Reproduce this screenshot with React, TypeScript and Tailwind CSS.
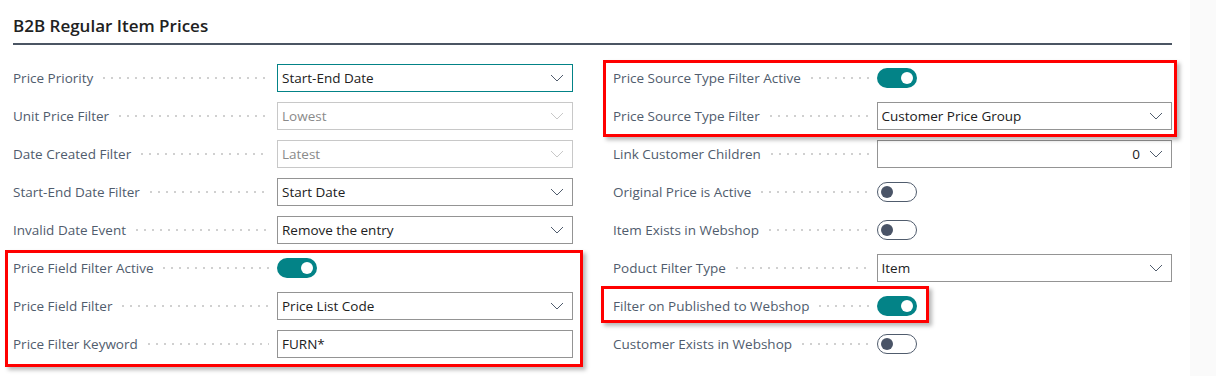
import React from 'react';

type Field =
    | { kind: 'select'; value: string; focused?: boolean; disabled?: boolean; align?: 'right' }
    | { kind: 'text'; value: string }
    | { kind: 'toggle'; on: boolean };

type Row = { label: string; field: Field };

const leftRows: Row[] = [
    { label: 'Price Priority', field: { kind: 'select', value: 'Start-End Date', focused: true } },
    { label: 'Unit Price Filter', field: { kind: 'select', value: 'Lowest', disabled: true } },
    { label: 'Date Created Filter', field: { kind: 'select', value: 'Latest', disabled: true } },
    { label: 'Start-End Date Filter', field: { kind: 'select', value: 'Start Date' } },
    { label: 'Invalid Date Event', field: { kind: 'select', value: 'Remove the entry' } },
];

const leftMarked: Row[] = [
    { label: 'Price Field Filter Active', field: { kind: 'toggle', on: true } },
    { label: 'Price Field Filter', field: { kind: 'select', value: 'Price List Code' } },
    { label: 'Price Filter Keyword', field: { kind: 'text', value: 'FURN*' } },
];

const rightMarkedTop: Row[] = [
    { label: 'Price Source Type Filter Active', field: { kind: 'toggle', on: true } },
    { label: 'Price Source Type Filter', field: { kind: 'select', value: 'Customer Price Group' } },
];

const rightMiddle: Row[] = [
    { label: 'Link Customer Children', field: { kind: 'select', value: '0', align: 'right' } },
    { label: 'Original Price is Active', field: { kind: 'toggle', on: false } },
    { label: 'Item Exists in Webshop', field: { kind: 'toggle', on: false } },
    { label: 'Poduct Filter Type', field: { kind: 'select', value: 'Item' } },
];

const Chevron: React.FC<{ disabled?: boolean }> = ({ disabled }) => (
    <svg width="14" height="8" viewBox="0 0 14 8" fill="none" className="shrink-0">
        <path d="M1 1l6 6 6-6" stroke={disabled ? '#c8c8c8' : '#505c6d'} strokeWidth="1" />
    </svg>
);

const Toggle: React.FC<{ on: boolean }> = ({ on }) =>
    on ? (
        <div className="flex h-[20px] w-[40px] items-center justify-end rounded-full bg-[#038387] pr-[4px]">
            <div className="h-[12px] w-[12px] rounded-full bg-white" />
        </div>
    ) : (
        <div className="flex h-[20px] w-[40px] items-center rounded-full border border-[#505c6d] bg-white pl-[3px]">
            <div className="h-[12px] w-[12px] rounded-full bg-[#4a5467]" />
        </div>
    );

const FieldBox: React.FC<{ field: Field }> = ({ field }) => {
    if (field.kind === 'toggle') {
        return (
            <div className="flex w-[296px] items-center">
                <Toggle on={field.on} />
            </div>
        );
    }
    if (field.kind === 'text') {
        return (
            <div className="flex h-[28px] w-[296px] items-center border border-[#949494] px-[4px] text-[#212121]">
                {field.value}
            </div>
        );
    }
    const border = field.focused
        ? 'border-[#038387]'
        : field.disabled
          ? 'border-[#c8c8c8]'
          : 'border-[#949494]';
    return (
        <div className={`flex h-[28px] w-[296px] items-center border ${border} pl-[4px] pr-[8px]`}>
            <span
                className={`flex-1 ${field.align === 'right' ? 'pr-[9px] text-right' : ''} ${
                    field.disabled ? 'text-[#8a8a8a]' : 'text-[#212121]'
                }`}
            >
                {field.value}
            </span>
            <Chevron disabled={field.disabled} />
        </div>
    );
};

const FormRow: React.FC<{ row: Row }> = ({ row }) => (
    <div className="flex h-[38px] items-center">
        <div className="flex w-[264px] items-center pr-[8px]">
            <span className="whitespace-nowrap text-[#505c6d]">{row.label}</span>
            <div className="ml-[10px] h-[2px] flex-1 bg-[linear-gradient(to_right,#d0d0d0_2px,transparent_2px)] bg-[length:8px_2px] bg-repeat-x" />
        </div>
        <FieldBox field={row.field} />
    </div>
);

const Marked: React.FC<{ rows: Row[]; box: string }> = ({ rows, box }) => (
    <div className="relative">
        {rows.map((r) => (
            <FormRow key={r.label} row={r} />
        ))}
        <div
            className={`pointer-events-none absolute border-[3px] border-[#ff0000] shadow-[3px_3px_4px_rgba(0,0,0,0.28)] ${box}`}
        />
    </div>
);

export default function App() {
    return (
        <div
            className="flex h-[376px] w-[1216px] overflow-hidden bg-white text-[13.5px]"
            style={{ fontFamily: '"Open Sans", "Noto Sans", Arial, sans-serif' }}
        >
            <div className="w-[1190px] pl-[13px]">
                <div className="w-[1159px] border-b-[2px] border-[#4b5563] pb-[6px] pt-[15px]">
                    <h1 className="text-[17px] font-semibold leading-[22px] text-[#212121]">
                        B2B Regular Item Prices
                    </h1>
                </div>

                <div className="mt-[14px] flex w-[1159px] gap-[40px]">
                    {/* Left column */}
                    <div className="w-[560px]">
                        {leftRows.map((r) => (
                            <FormRow key={r.label} row={r} />
                        ))}
                        <Marked rows={leftMarked} box="-left-[8px] -right-[10px] top-[1px] -bottom-[4px]" />
                    </div>

                    {/* Right column */}
                    <div className="w-[559px]">
                        <Marked rows={rightMarkedTop} box="-left-[10px] -right-[5px] top-[1px] -bottom-[2px]" />
                        {rightMiddle.map((r) => (
                            <FormRow key={r.label} row={r} />
                        ))}
                        <Marked
                            rows={[{ label: 'Filter on Published to Webshop', field: { kind: 'toggle', on: true } }]}
                            box="-left-[12px] right-[243px] -top-[1px] bottom-[2px]"
                        />
                        <FormRow row={{ label: 'Customer Exists in Webshop', field: { kind: 'toggle', on: false } }} />
                    </div>
                </div>
            </div>
            <div className="flex-1 bg-[#fafafa]" />
        </div>
    );
}
